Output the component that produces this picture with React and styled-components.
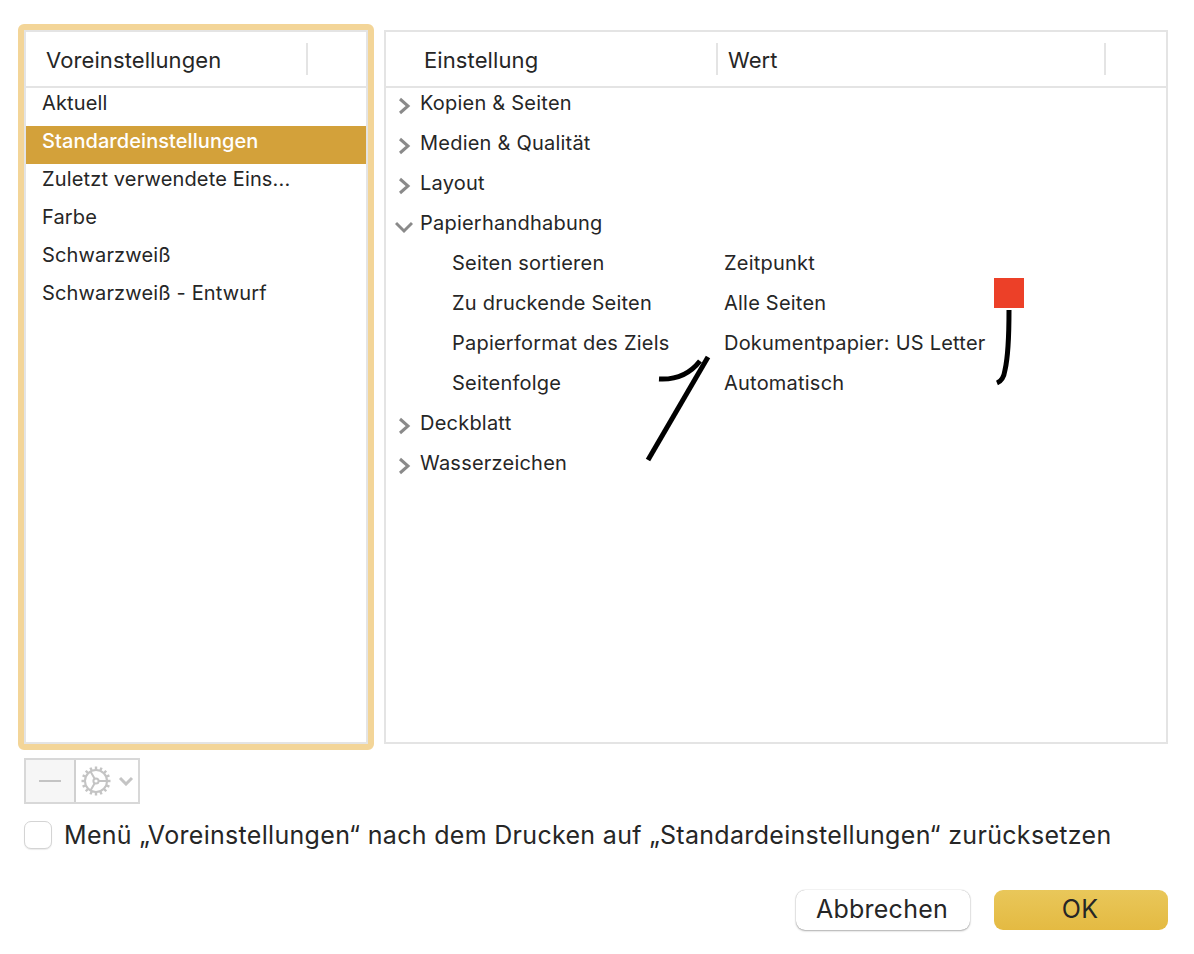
import React from 'react';
import styled, { createGlobalStyle } from 'styled-components';

const GlobalStyle = createGlobalStyle`
  html, body { margin: 0; padding: 0; background: #fff; }
  body { font-family: Inter, "Liberation Sans", sans-serif; color: #262626; }
`;

const Dialog = styled.div`
  width: 1194px;
  height: 954px;
  box-sizing: border-box;
  padding: 24px 26px 0 18px;
  display: flex;
  flex-direction: column;
  overflow: hidden;
`;

const Panels = styled.div`
  display: flex;
  gap: 10px;
  height: 726px;
`;

const FocusRing = styled.div`
  width: 356px;
  box-sizing: border-box;
  border: 6px solid #f3d598;
  border-radius: 6px;
  display: flex;
`;

const Table = styled.div`
  flex: 1;
  position: relative;
  box-sizing: border-box;
  border: 2px solid #e4e4e4;
  background: #fff;
`;

const RightTable = styled(Table)`
  margin: 6px 0;
`;

const Head = styled.div`
  height: 54px;
  border-bottom: 2px solid #e4e4e4;
  display: flex;
  align-items: center;
  font-size: 22px;
  line-height: 34px;
`;

const HeadCell = styled.div`
  width: ${p => p.$width}px;
  height: 32px;
  box-sizing: border-box;
  padding-left: ${p => p.$pad}px;
  border-right: 2px solid #e4e4e4;
  letter-spacing: 0.1px;
`;

const PresetRow = styled.div`
  height: 38px;
  box-sizing: border-box;
  padding: 0 0 8px 16px;
  display: flex;
  align-items: center;
  font-size: 20px;
  letter-spacing: ${p => (p.$selected ? '0.07px' : '0.15px')};
  background: ${p => (p.$selected ? '#d3a13a' : 'transparent')};
  color: ${p => (p.$selected ? '#fff' : '#262626')};
  font-weight: ${p => (p.$selected ? 500 : 400)};
`;

const SettingRow = styled.div`
  height: 40px;
  box-sizing: border-box;
  padding: 0 0 10px ${p => (p.$child ? 66 : 9)}px;
  display: flex;
  align-items: center;
  font-size: 20px;
  letter-spacing: 0.22px;
`;

const Arrow = styled.svg`
  width: 18px;
  height: 20px;
  margin-top: 6px;
  margin-right: 7px;
  flex: none;
`;

const NameCell = styled.div`
  width: 272px;
  flex: none;
  white-space: nowrap;
`;

const RedMark = styled.div`
  position: absolute;
  left: 608px;
  top: 246px;
  width: 30px;
  height: 30px;
  background: #ec4028;
`;

const Ink = styled.svg`
  position: absolute;
  left: 0;
  top: 0;
  width: 780px;
  height: 710px;
  pointer-events: none;
`;

const Toolbar = styled.div`
  margin: 8px 0 0 6px;
  width: 116px;
  height: 46px;
  box-sizing: border-box;
  border: 2px solid #d8d8d8;
  display: flex;
`;

const MinusButton = styled.div`
  width: 48px;
  background: #f6f6f6;
  border-right: 2px solid #d0d0d0;
  display: flex;
  align-items: center;
  justify-content: center;
  &::before {
    content: "";
    width: 22px;
    height: 2px;
    background: #c4c4c4;
  }
`;

const GearButton = styled.div`
  flex: 1;
  display: flex;
  align-items: center;
  padding-left: 5px;
  gap: 7px;
`;

const CheckLine = styled.div`
  margin: 15px 0 0 6px;
  display: flex;
  align-items: center;
  gap: 12px;
  font-size: 25px;
  line-height: 32px;
  letter-spacing: 0.31px;
  white-space: nowrap;
`;

const CheckBox = styled.span`
  width: 28px;
  height: 28px;
  box-sizing: border-box;
  flex: none;
  border: 1px solid #d4d4d4;
  border-radius: 7px;
  background: #fff;
  box-shadow: 0 1px 1px rgba(0, 0, 0, 0.08);
`;

const Actions = styled.div`
  margin-top: 39px;
  display: flex;
  justify-content: flex-end;
  gap: 24px;
`;

const Button = styled.div`
  width: 174px;
  height: 40px;
  box-sizing: border-box;
  padding: 0 2px 2px 0;
  border-radius: 9px;
  display: flex;
  align-items: center;
  justify-content: center;
  font-size: 25px;
  letter-spacing: 0.25px;
  background: ${p => (p.$primary ? 'linear-gradient(#e9c75a, #e4ba42)' : '#fff')};
  box-shadow: ${p =>
    p.$primary ? 'none' : '0 0 1px rgba(0,0,0,.35), 0 1px 2px rgba(0,0,0,.3)'};
`;

const Chevron = ({ open }) => (
  <Arrow viewBox="0 0 18 20">
    <path
      d={open ? 'M1 7 L9 15 L17 7' : 'M5 3 L13 10 L5 17'}
      fill="none"
      stroke="#8a8a8a"
      strokeWidth="3"
    />
  </Arrow>
);

const Gear = () => {
  const teeth = [];
  for (let i = 0; i < 16; i++) {
    teeth.push(<rect key={i} x="13.8" y="0.5" width="2.4" height="4" fill="#c4c4c4" transform={`rotate(${i * 22.5} 15 15)`} />);
  }
  return (
    <svg width="30" height="30" viewBox="0 0 30 30">
      {teeth}
      <circle cx="15" cy="15" r="11" fill="#fff" stroke="#c4c4c4" strokeWidth="2" />
      <circle cx="15" cy="15" r="2.6" fill="none" stroke="#c4c4c4" strokeWidth="2" />
      <path d="M17.6 15 H26 M13.7 12.8 L9.5 5.5 M13.7 17.2 L9.5 24.5" stroke="#c4c4c4" strokeWidth="2" fill="none" />
    </svg>
  );
};

const presets = ['Aktuell', 'Standardeinstellungen', 'Zuletzt verwendete Eins...', 'Farbe', 'Schwarzweiß', 'Schwarzweiß - Entwurf'];

const children = [
  ['Seiten sortieren', 'Zeitpunkt'],
  ['Zu druckende Seiten', 'Alle Seiten'],
  ['Papierformat des Ziels', 'Dokumentpapier: US Letter'],
  ['Seitenfolge', 'Automatisch'],
];

function App() {
  return (
    <Dialog>
      <GlobalStyle />
      <Panels>
        <FocusRing>
          <Table>
            <Head>
              <HeadCell $width={282} $pad={20}>Voreinstellungen</HeadCell>
            </Head>
            {presets.map(name => (
              <PresetRow key={name} $selected={name === 'Standardeinstellungen'}>{name}</PresetRow>
            ))}
          </Table>
        </FocusRing>
        <RightTable>
          <Head>
            <HeadCell $width={332} $pad={38}>Einstellung</HeadCell>
            <HeadCell $width={388} $pad={10}>Wert</HeadCell>
          </Head>
          <SettingRow><Chevron />Kopien &amp; Seiten</SettingRow>
          <SettingRow><Chevron />Medien &amp; Qualität</SettingRow>
          <SettingRow><Chevron />Layout</SettingRow>
          <SettingRow><Chevron open />Papierhandhabung</SettingRow>
          {children.map(([name, value]) => (
            <SettingRow key={name} $child>
              <NameCell>{name}</NameCell>
              {value}
            </SettingRow>
          ))}
          <SettingRow><Chevron />Deckblatt</SettingRow>
          <SettingRow><Chevron />Wasserzeichen</SettingRow>
          <RedMark />
          <Ink viewBox="0 0 780 710">
            <g fill="none" stroke="#000" strokeWidth="5">
              <path d="M262 428 L322 325" />
              <path d="M273 347 C290 348 303 343 314 329" />
              <path d="M623 278 C623 305 622 325 619 338 C618 345 616 349 611 351" />
            </g>
          </Ink>
        </RightTable>
      </Panels>
      <Toolbar>
        <MinusButton />
        <GearButton>
          <Gear />
          <svg width="16" height="10" viewBox="0 0 16 10">
            <path d="M2 2 L8 8 L14 2" fill="none" stroke="#c4c4c4" strokeWidth="3" />
          </svg>
        </GearButton>
      </Toolbar>
      <CheckLine>
        <CheckBox />
        Menü „Voreinstellungen“ nach dem Drucken auf „Standardeinstellungen“ zurücksetzen
      </CheckLine>
      <Actions>
        <Button>Abbrechen</Button>
        <Button $primary>OK</Button>
      </Actions>
    </Dialog>
  );
}

export default App;
